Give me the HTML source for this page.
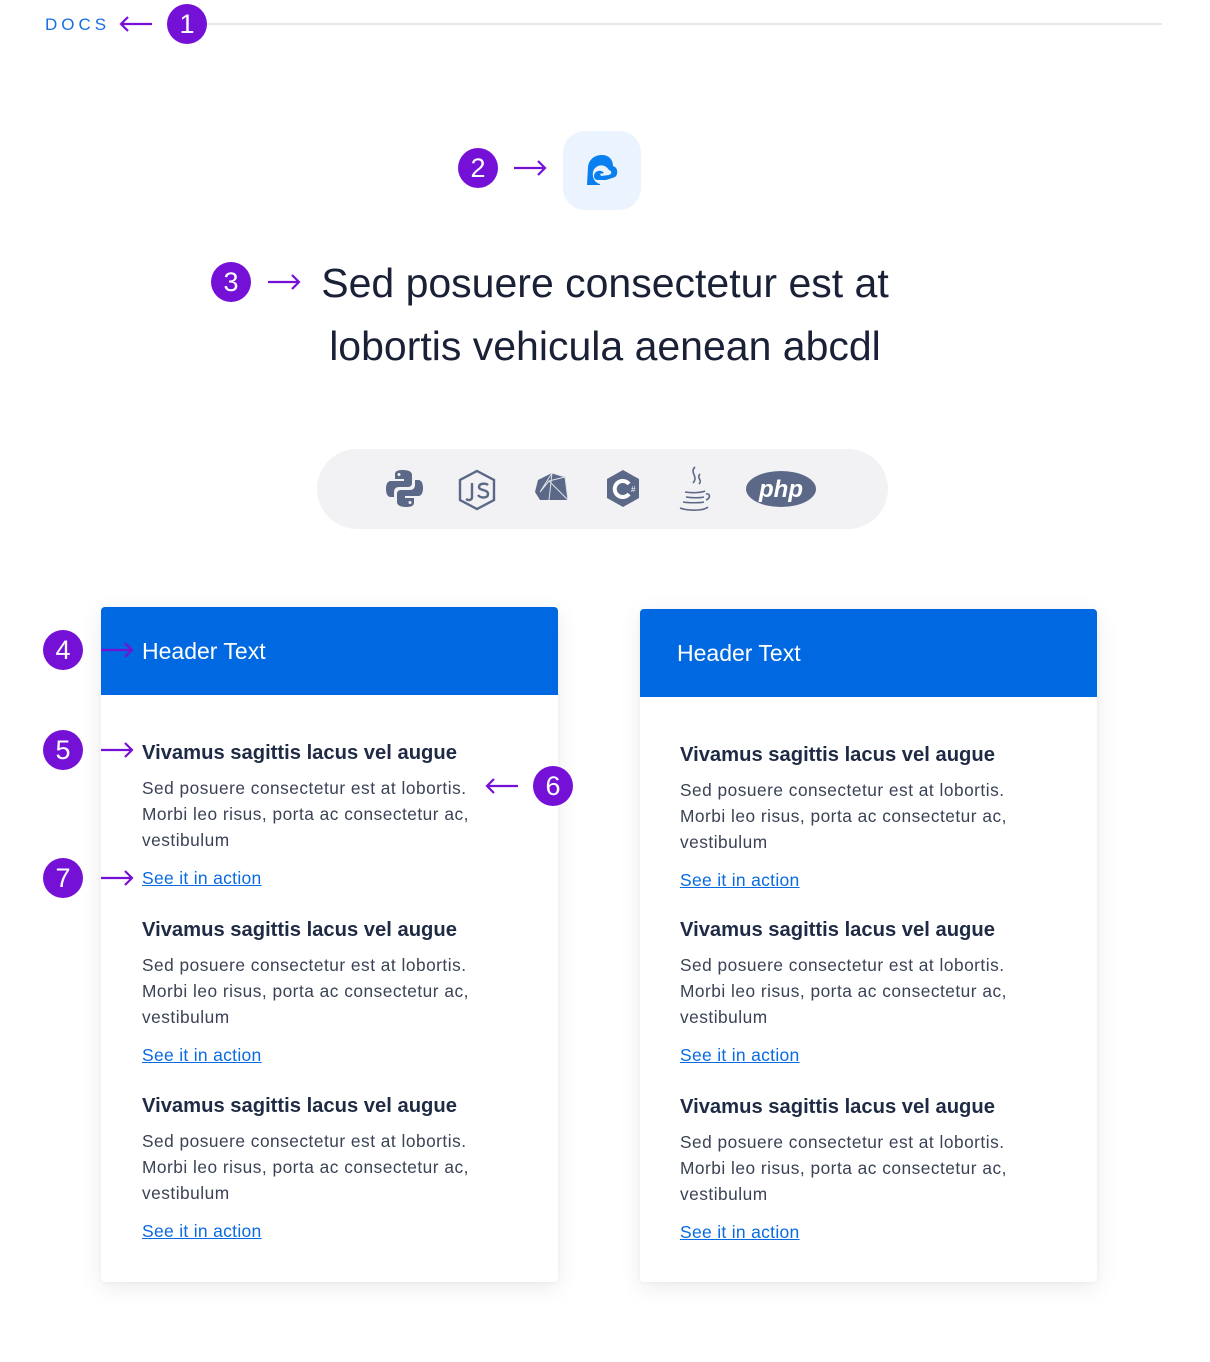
<!DOCTYPE html>
<html><head><meta charset="utf-8"><style>
*{margin:0;padding:0;box-sizing:border-box}
body{width:1210px;height:1362px;background:#fff;position:relative;overflow:hidden;font-family:"Liberation Sans",sans-serif;color:#1a2540}
.a{position:absolute;white-space:nowrap}
.badge{position:absolute;width:40px;height:40px;border-radius:50%;background:#7511d6;color:#fff;font-size:27px;line-height:40px;text-align:center}
.card{position:absolute;width:457px;background:#fff;border-radius:4px;box-shadow:0 6px 24px rgba(0,0,0,.08),0 1px 4px rgba(0,0,0,.04);overflow:hidden}
.hd{height:88px;background:#0068e0;color:#fff;font-size:23px;padding:31px 0 0 41px;line-height:26px}
.sec{position:absolute;left:41px}
.sec h3{font-size:20.2px;font-weight:bold;color:#1f2a44;line-height:24px;white-space:nowrap}
.sec p{font-size:17.3px;letter-spacing:0.5px;line-height:26px;color:#3a4256;margin-top:10px;white-space:nowrap}
.sec a{display:block;margin-top:13px;font-size:17.5px;letter-spacing:0.3px;color:#0a6be0;text-decoration:underline;line-height:24px}
.t{position:absolute;left:205px;width:800px;text-align:center;font-size:41px;line-height:50px;color:#1a2036;white-space:nowrap}
</style></head><body>
<div class="a" style="left:45px;top:15px;font-size:17px;letter-spacing:4px;color:#1a6fe0">DOCS</div>
<svg class="a" style="left:118px;top:14px" width="36" height="20"><path d="M34 10H3M10 3L3 10L10 17" stroke="#7511d6" stroke-width="2.2" fill="none"/></svg>
<div style="position:absolute;left:207px;top:23px;width:955px;height:2px;background:#e8e8e8"></div>
<div class="badge" style="left:167px;top:4px">1</div>

<div class="badge" style="left:458px;top:148px">2</div>
<svg class="a" style="left:512px;top:158px" width="36" height="20"><path d="M2 10H33M26 3L33 10L26 17" stroke="#7511d6" stroke-width="2.2" fill="none"/></svg>
<div style="position:absolute;left:563px;top:131px;width:78px;height:79px;border-radius:22px;background:#eaf3fe"></div>
<svg class="a" style="left:584px;top:153px" width="36" height="36" viewBox="0 0 36 36"><path d="M3 32L4 14C5 6 11 2 18 2C25 2 29 7 29 13L31 14C34 16 34 22 31 24L22 27L14 27C10 27 9 23 11 20C13 17 18 17 20 20L16 21L17 23L25 22C28 21 28 18 25 17C21 10 11 11 9 19C8 25 11 30 16 31L16 32Z" fill="#0a7ff0"/></svg>

<div class="badge" style="left:211px;top:262px">3</div>
<svg class="a" style="left:266px;top:272px" width="36" height="20"><path d="M2 10H33M26 3L33 10L26 17" stroke="#7511d6" stroke-width="2.2" fill="none"/></svg>
<div class="t" style="top:258px">Sed posuere consectetur est at</div>
<div class="t" style="top:321px">lobortis vehicula aenean abcdl</div>

<div style="position:absolute;left:317px;top:449px;width:571px;height:80px;border-radius:40px;background:#f2f2f5"></div>
<svg class="a" style="left:380px;top:462px" width="450" height="56">
<g fill="#5b6887">
<path d="M23 8c-8 0-8 3-8 5v4h9v2H11c-4 0-5 4-5 8s1 8 5 8h3v-5c0-3 2-5 5-5h9c3 0 4-2 4-4v-8c0-3-3-5-9-5zm-4 3a1.5 1.5 0 1 1 0 3a1.5 1.5 0 1 1 0-3z"/>
<path d="M26 45c8 0 8-3 8-5v-4h-9v-2h13c4 0 5-4 5-8s-1-8-5-8h-3v5c0 3-2 5-5 5h-9c-3 0-4 2-4 4v8c0 3 3 5 9 5zm4-3a1.5 1.5 0 1 1 0-3a1.5 1.5 0 1 1 0 3z"/>
</g>
<g stroke="#5b6887" stroke-width="2.4" fill="none"><path d="M97 9l17 9v20l-17 9l-17-9V18z"/><path d="M92 21v14c0 3-3 4-6 2"/><path d="M108 23c-2-2-9-2-9 2s9 2 9 7s-8 4-10 1"/></g>
<path d="M158 18l14-7l13 4l3 23l-28 0l-5-8z" fill="#5b6887"/><path d="M160 30l12-19l13 4l-16 4zM172 11l-3 27M169 19l19 19M160 30l9-11M185 15l3 23" stroke="#dfe2ea" stroke-width="1" fill="none"/>
<path d="M243 8l16 9v19l-16 9l-16-9V17z" fill="#5b6887"/><path d="M249 22a8 8 0 1 0 0 10" stroke="#fff" stroke-width="4" fill="none"/><text x="251" y="30" font-size="8" fill="#fff" font-family="Liberation Sans">#</text>
<g stroke="#5b6887" stroke-width="1.6" fill="none"><path d="M315 5c-6 6 4 9-2 16M320 12c-4 4 3 6-1 10"/><path d="M305 30c6 1 16 1 20-1M306 35c6 1 14 1 18 0M303 40c6 1 17 1 21 0M300 46c8 3 24 3 28-1M326 32c4-1 5 4 0 6"/></g>
<ellipse cx="401" cy="27" rx="35" ry="18" fill="#5b6887"/><text x="401" y="35" text-anchor="middle" font-size="24" font-style="italic" font-weight="bold" fill="#fff" font-family="Liberation Sans">php</text>
</svg>

<div class="card" style="left:101px;top:607px;height:675px">
<div class="hd">Header Text</div>
<div class="sec" style="top:134px"><h3>Vivamus sagittis lacus vel augue</h3><p>Sed posuere consectetur est at lobortis.<br>Morbi leo risus, porta ac consectetur ac,<br>vestibulum</p><a>See it in action</a></div>
<div class="sec" style="top:311px"><h3>Vivamus sagittis lacus vel augue</h3><p>Sed posuere consectetur est at lobortis.<br>Morbi leo risus, porta ac consectetur ac,<br>vestibulum</p><a>See it in action</a></div>
<div class="sec" style="top:487px"><h3>Vivamus sagittis lacus vel augue</h3><p>Sed posuere consectetur est at lobortis.<br>Morbi leo risus, porta ac consectetur ac,<br>vestibulum</p><a>See it in action</a></div>
</div>
<div class="card" style="left:640px;top:609px;height:673px">
<div class="hd" style="padding-left:37px">Header Text</div>
<div class="sec" style="left:40px;top:134px"><h3>Vivamus sagittis lacus vel augue</h3><p>Sed posuere consectetur est at lobortis.<br>Morbi leo risus, porta ac consectetur ac,<br>vestibulum</p><a>See it in action</a></div>
<div class="sec" style="left:40px;top:309px"><h3>Vivamus sagittis lacus vel augue</h3><p>Sed posuere consectetur est at lobortis.<br>Morbi leo risus, porta ac consectetur ac,<br>vestibulum</p><a>See it in action</a></div>
<div class="sec" style="left:40px;top:486px"><h3>Vivamus sagittis lacus vel augue</h3><p>Sed posuere consectetur est at lobortis.<br>Morbi leo risus, porta ac consectetur ac,<br>vestibulum</p><a>See it in action</a></div>
</div>

<div class="badge" style="left:43px;top:630px">4</div>
<svg class="a" style="left:99px;top:640px" width="36" height="20"><path d="M2 10H33M26 3L33 10L26 17" stroke="#7511d6" stroke-width="2.2" fill="none"/></svg>
<div class="badge" style="left:43px;top:730px">5</div>
<svg class="a" style="left:99px;top:740px" width="36" height="20"><path d="M2 10H33M26 3L33 10L26 17" stroke="#7511d6" stroke-width="2.2" fill="none"/></svg>
<div class="badge" style="left:533px;top:766px">6</div>
<svg class="a" style="left:484px;top:776px" width="36" height="20"><path d="M34 10H3M10 3L3 10L10 17" stroke="#7511d6" stroke-width="2.2" fill="none"/></svg>
<div class="badge" style="left:43px;top:858px">7</div>
<svg class="a" style="left:99px;top:868px" width="36" height="20"><path d="M2 10H33M26 3L33 10L26 17" stroke="#7511d6" stroke-width="2.2" fill="none"/></svg>
</body></html>
